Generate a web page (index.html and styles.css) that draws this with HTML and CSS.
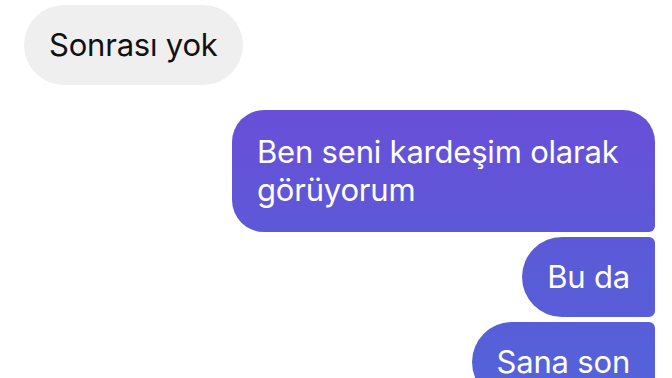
FILE: index.html
```html
<!doctype html>
<html lang="tr">

<head>
    <meta charset="UTF-8">
    <title>Mesajlar</title>
    <link rel="stylesheet" href="styles.css">
</head>

<body>
    <div class="chat">
        <div class="row in">
            <div class="msg">Sonrası yok</div>
        </div>

        <div class="group out">
            <div class="row">
                <div class="msg first">Ben seni kardeşim olarak görüyorum</div>
            </div>
            <div class="row">
                <div class="msg mid">Bu da</div>
            </div>
            <div class="row">
                <div class="msg last">Sana son</div>
            </div>
        </div>
    </div>
</body>

</html>
```

FILE: styles.css
```css
* {
    margin: 0;
    padding: 0;
    box-sizing: border-box;
}

body {
    background: #fff;
    font-family: "Inter", "Liberation Sans", sans-serif;
    font-size: 31px;
    letter-spacing: -0.2px;
    overflow: hidden;
}

.chat {
    display: flex;
    flex-direction: column;
    padding: 5px 17px 0 24px;
}

.row {
    display: flex;
}

.msg {
    line-height: 38px;
    padding: 21px 25px;
    border-radius: 40px;
}

/* incoming */
.in .msg {
    background: #efefef;
    color: #111;
    padding-right: 25px;
}

/* outgoing */
.group {
    display: flex;
    flex-direction: column;
    align-items: flex-end;
    gap: 5px;
    margin-top: 25px;
}

.out .row {
    justify-content: flex-end;
}

.out .msg {
    color: #fff;
    background: linear-gradient(180deg, #7049d9 0%, #6552d8 40%, #5a5bd7 70%, #5562d9 100%);
    background-attachment: fixed;
}

.out .msg.first {
    width: 423px;
    padding: 23px 35px 23px 25px;
    border-radius: 32px 32px 6px 32px;
}

.out .msg.mid {
    border-radius: 40px 6px 6px 40px;
}

.out .msg.last {
    border-radius: 40px 6px 6px 40px;
}
```
